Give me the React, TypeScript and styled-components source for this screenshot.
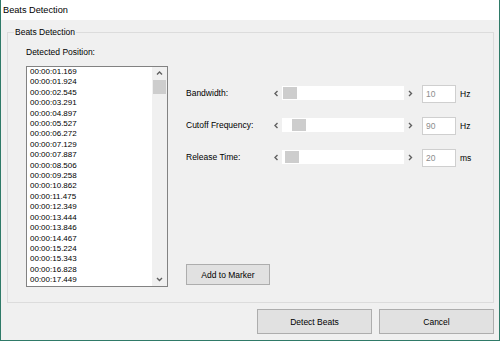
import React from "react";
import styled, { createGlobalStyle } from "styled-components";

const Global = createGlobalStyle`
  html, body { margin: 0; padding: 0; background: #f0f0f0; }
  body { font-family: "Liberation Sans", Arial, sans-serif; color: #000; }
  * { box-sizing: border-box; }
`;

const Window = styled.div`
  width: 500px;
  height: 341px;
  display: flex;
  flex-direction: column;
  background: #f0f0f0;
  border: 1px solid #2f7a68;
  border-top: none;
  overflow: hidden;
`;

const TitleBar = styled.div`
  height: 20px;
  flex: none;
  background: #fff;
  display: flex;
  align-items: center;
  padding-left: 2px;
  font-size: 9.2px;
`;

const Body = styled.div`
  flex: 1;
  display: flex;
  flex-direction: column;
  padding: 12px 5px 6px 6px;
`;

const GroupBox = styled.div`
  height: 271px;
  border: 1px solid #dcdcdc;
  display: flex;
  flex-direction: column;
`;

const Caption = styled.div`
  align-self: flex-start;
  margin: -6px 0 0 6px;
  padding: 0 1px;
  background: #f0f0f0;
  font-size: 8.5px;
  line-height: 11px;
`;

const Content = styled.div`
  flex: 1;
  display: flex;
  padding: 9px 0 15px 18px;
  gap: 18px;
`;

const LeftCol = styled.div`
  display: flex;
  flex-direction: column;
`;

const Label = styled.div`
  font-size: 8.5px;
  line-height: 11px;
  white-space: nowrap;
`;

const ListBox = styled.div`
  margin-top: 8px;
  width: 142px;
  height: 221px;
  border: 1px solid #828282;
  background: #fff;
  display: flex;
`;

const ListItems = styled.div`
  flex: 1;
  padding: 0 0 0 3px;
  font-size: 8px;
  line-height: 10.4px;
  overflow: hidden;
`;

const VScroll = styled.div`
  width: 15px;
  background: #f0f0f0;
  display: flex;
  flex-direction: column;
  align-items: center;
`;

const VArrow = styled.div`
  height: 13px;
  width: 100%;
  display: flex;
  align-items: center;
  justify-content: center;
`;

const VThumb = styled.div`
  width: 13px;
  height: 14px;
  background: #cdcdcd;
`;

const VSpacer = styled.div`
  flex: 1;
`;

const RightCol = styled.div`
  flex: 1;
  display: flex;
  flex-direction: column;
  padding-top: 38px;
  padding-bottom: 2px;
  gap: 14px;
`;

const Row = styled.div`
  height: 18px;
  display: flex;
  align-items: center;
`;

const RowLabel = styled(Label)`
  width: 84px;
  margin-top: -2px;
`;

const Track = styled.div`
  width: 146px;
  height: 14px;
  display: flex;
  margin-top: -2px;
`;

const HArrow = styled.div`
  width: 12px;
  height: 14px;
  display: flex;
  align-items: center;
  justify-content: center;
`;

const TrackBody = styled.div`
  flex: 1;
  background: #fff;
  display: flex;
  align-items: center;
`;

const HThumb = styled.div<{ $offset: number }>`
  width: 14px;
  height: 12px;
  background: #cdcdcd;
  margin-left: ${(p) => p.$offset}px;
`;

const TextBox = styled.div`
  margin-left: 6px;
  width: 34px;
  height: 18px;
  border: 1px solid #cfcfcf;
  background: #fff;
  color: #8d8d8d;
  font-size: 8.5px;
  line-height: 16px;
  padding-left: 3px;
`;

const Unit = styled.div`
  margin-left: 4px;
  font-size: 8.5px;
`;

const Button = styled.button<{ $w: number; $h: number }>`
  width: ${(p) => p.$w}px;
  height: ${(p) => p.$h}px;
  background: #e1e1e1;
  border: 1px solid #adadad;
  font-family: "Liberation Sans", Arial, sans-serif;
  font-size: 8.5px;
  color: #000;
  padding: 0;
`;

const AddButton = styled(Button)`
  margin-top: auto;
`;

const ButtonBar = styled.div`
  margin-top: 6px;
  height: 25px;
  display: flex;
  justify-content: flex-end;
  gap: 7px;
`;

const Chevron = ({ dir }: { dir: "up" | "down" | "left" | "right" }) => {
  const paths: Record<string, string> = {
    up: "M1 4.5 L3.5 2 L6 4.5",
    down: "M1 2 L3.5 4.5 L6 2",
    left: "M4.5 1 L2 3.5 L4.5 6",
    right: "M2 1 L4.5 3.5 L2 6",
  };
  return (
    <svg width="7" height="7" viewBox="0 0 7 7">
      <path d={paths[dir]} fill="none" stroke="#606060" strokeWidth="1.4" />
    </svg>
  );
};

const times = [
  "00:00:01.169",
  "00:00:01.924",
  "00:00:02.545",
  "00:00:03.291",
  "00:00:04.897",
  "00:00:05.527",
  "00:00:06.272",
  "00:00:07.129",
  "00:00:07.887",
  "00:00:08.506",
  "00:00:09.258",
  "00:00:10.862",
  "00:00:11.475",
  "00:00:12.349",
  "00:00:13.444",
  "00:00:13.846",
  "00:00:14.467",
  "00:00:15.224",
  "00:00:15.343",
  "00:00:16.828",
  "00:00:17.449",
];

const sliders = [
  { label: "Bandwidth:", offset: 1, value: "10", unit: "Hz" },
  { label: "Cutoff Frequency:", offset: 10, value: "90", unit: "Hz" },
  { label: "Release Time:", offset: 3, value: "20", unit: "ms" },
];

export default function App() {
  return (
    <>
      <Global />
      <Window>
        <TitleBar>Beats Detection</TitleBar>
        <Body>
          <GroupBox>
            <Caption>Beats Detection</Caption>
            <Content>
              <LeftCol>
                <Label>Detected Position:</Label>
                <ListBox>
                  <ListItems>
                    {times.map((t) => (
                      <div key={t}>{t}</div>
                    ))}
                  </ListItems>
                  <VScroll>
                    <VArrow>
                      <Chevron dir="up" />
                    </VArrow>
                    <VThumb />
                    <VSpacer />
                    <VArrow>
                      <Chevron dir="down" />
                    </VArrow>
                  </VScroll>
                </ListBox>
              </LeftCol>
              <RightCol>
                {sliders.map((s) => (
                  <Row key={s.label}>
                    <RowLabel>{s.label}</RowLabel>
                    <Track>
                      <HArrow>
                        <Chevron dir="left" />
                      </HArrow>
                      <TrackBody>
                        <HThumb $offset={s.offset} />
                      </TrackBody>
                      <HArrow>
                        <Chevron dir="right" />
                      </HArrow>
                    </Track>
                    <TextBox>{s.value}</TextBox>
                    <Unit>{s.unit}</Unit>
                  </Row>
                ))}
                <AddButton $w={84} $h={21}>
                  Add to Marker
                </AddButton>
              </RightCol>
            </Content>
          </GroupBox>
          <ButtonBar>
            <Button $w={115} $h={25}>
              Detect Beats
            </Button>
            <Button $w={115} $h={25}>
              Cancel
            </Button>
          </ButtonBar>
        </Body>
      </Window>
    </>
  );
}
